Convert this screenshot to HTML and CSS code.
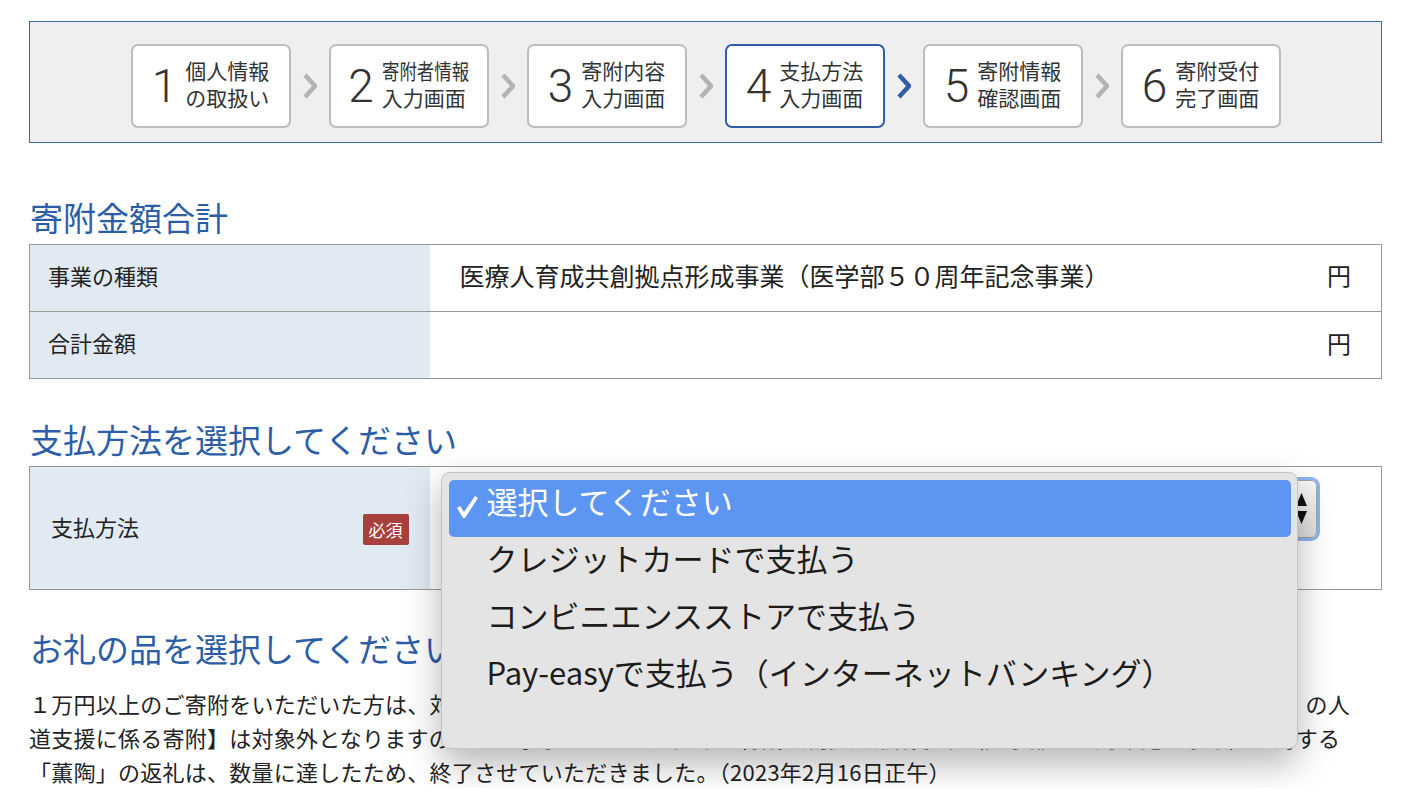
FILE: index.html
```html
<!DOCTYPE html>
<html lang="ja">
<head>
  <meta charset="UTF-8" />
  <meta name="viewport" content="width=device-width, initial-scale=1" />
  <title>寄附申込 支払方法入力画面</title>
  <link rel="stylesheet" href="styles.css">
</head>
<body>
  <div class="page">

    <div class="steps">
      <div class="step">
        <span class="step-no">1</span>
        <span class="step-label">個人情報<br>の取扱い</span>
      </div>
      <svg class="chev" viewBox="0 0 14 26"><polyline points="2,2 12,13 2,24" /></svg>
      <div class="step">
        <span class="step-no">2</span>
        <span class="step-label"><span class="narrow">寄附者情報</span><br>入力画面</span>
      </div>
      <svg class="chev" viewBox="0 0 14 26"><polyline points="2,2 12,13 2,24" /></svg>
      <div class="step">
        <span class="step-no">3</span>
        <span class="step-label">寄附内容<br>入力画面</span>
      </div>
      <svg class="chev" viewBox="0 0 14 26"><polyline points="2,2 12,13 2,24" /></svg>
      <div class="step current">
        <span class="step-no">4</span>
        <span class="step-label">支払方法<br>入力画面</span>
      </div>
      <svg class="chev next" viewBox="0 0 14 26"><polyline points="2,2 12,13 2,24" /></svg>
      <div class="step">
        <span class="step-no">5</span>
        <span class="step-label">寄附情報<br>確認画面</span>
      </div>
      <svg class="chev" viewBox="0 0 14 26"><polyline points="2,2 12,13 2,24" /></svg>
      <div class="step">
        <span class="step-no">6</span>
        <span class="step-label">寄附受付<br>完了画面</span>
      </div>
    </div>

    <h2 class="sec-title first">寄附金額合計</h2>
    <table class="form-table">
      <tr>
        <th>事業の種類</th>
        <td><div class="amount"><span>医療人育成共創拠点形成事業（医学部５０周年記念事業）</span><span>円</span></div></td>
      </tr>
      <tr>
        <th>合計金額</th>
        <td><div class="amount"><span></span><span>円</span></div></td>
      </tr>
    </table>

    <h2 class="sec-title">支払方法を選択してください</h2>
    <table class="form-table pay-table">
      <tr>
        <th><div class="label-row"><span>支払方法</span><span class="req">必須</span></div></th>
        <td>
          <div class="select-wrap">
            <div class="select">
              <svg class="select-arrows" viewBox="0 0 11 32"><polygon points="5.5,0 11,13 0,13" /><polygon points="0,18 11,18 5.5,31" /></svg>
            </div>
            <ul class="popup">
              <li class="selected">
                <svg class="check" viewBox="0 0 24 26"><path d="M2 14 L5 12 L9 18 L20 2 L23 4 L10 24 L8 24 Z" /></svg>
                選択してください
              </li>
              <li>クレジットカードで支払う</li>
              <li>コンビニエンスストアで支払う</li>
              <li>Pay-easyで支払う（インターネットバンキング）</li>
            </ul>
          </div>
        </td>
      </tr>
    </table>

    <h2 class="sec-title gift">お礼の品を選択してください</h2>
    <p class="note">１万円以上のご寄附をいただいた方は、対象のお礼の品をお選びいただけます。ただし、【ウクライナ及びトルコ（地震被災地）の人<br>道支援に係る寄附】は対象外となりますので、ご了承ください。医療人育成共創拠点形成事業（医学部５０周年記念事業）に対する<br>「薫陶」の返礼は、数量に達したため、終了させていただきました。（2023年2月16日正午）</p>

  </div>
</body>
</html>
```

FILE: styles.css
```css
body {
  margin: 0;
  font-family: "Noto Sans CJK JP", "Noto Sans", sans-serif;
  color: #222;
  background: #fff;
}
.page {
  width: 1353px;
  padding: 21px 0 0 29px;
}

/* steps */
.steps {
  display: flex;
  justify-content: center;
  align-items: center;
  gap: 12px;
  background-color: #efefef;
  border: 1px solid #3d69ad;
  padding: 22px 0 14px;
}
.step {
  box-sizing: border-box;
  width: 160px;
  height: 84px;
  background: white;
  border: 2px solid #bdbdbd;
  border-radius: 7px;
  display: flex;
  align-items: center;
  justify-content: center;
  gap: 8px;
  color: #333;
}
.step.current {
  border-color: #2f5ea6;
}
.step-no {
  font-family: Roboto, "Liberation Sans", sans-serif;
  font-weight: 300;
  font-size: 46px;
  line-height: 1;
}
.step-label {
  font-size: 21px;
  line-height: 27px;
  margin-top: -5px;
}
.narrow {
  display: inline-block;
  width: 87px;
  white-space: nowrap;
  transform: scaleX(0.83);
  transform-origin: left center;
}
.chev {
  width: 14px;
  height: 26px;
  flex: none;
}
.chev polyline {
  fill: none;
  stroke: #b3b3b3;
  stroke-width: 4.5;
}
.chev.next polyline {
  stroke: #2f5ea6;
}

/* section titles */
.sec-title {
  font-size: 33px;
  font-weight: normal;
  color: #2c5ea7;
  line-height: 40px;
  margin: 40px 0 7px 1px;
}
.sec-title.first {
  margin-top: 54px;
  margin-bottom: 7px;
}
.sec-title.gift {
  margin-top: 38px;
  margin-bottom: 18px;
}

/* tables */
.form-table {
  width: 100%;
  border-collapse: collapse;
  border: 1px solid #999;
}
.form-table th,
.form-table td {
  border-top: 1px solid #999;
  height: 67px;
  padding: 0 0 6px;
  box-sizing: border-box;
}
.form-table th {
  width: 400px;
  background-color: #e1e9f3;
  font-weight: normal;
  font-size: 22px;
  text-align: left;
  padding-left: 18px;
}
.form-table td {
  font-size: 25px;
  padding-left: 30px;
  padding-right: 30px;
}
.amount {
  display: flex;
  justify-content: space-between;
}
.amount span:last-child {
  font-size: 24px;
}
.pay-table th {
  height: 123px;
  padding: 0 21px 4px 21px;
}
.pay-table td {
  vertical-align: top;
  padding: 13px 64px 0 18px;
}
.label-row {
  display: flex;
  justify-content: space-between;
  align-items: center;
}
.req {
  background-color: #a8413d;
  color: white;
  font-size: 17px;
  line-height: 31px;
  padding: 0 6px;
  border-radius: 2px;
  margin-top: 6px;
}

/* select + open list */
.select-wrap {
  position: relative;
}
.select {
  height: 58px;
  box-sizing: border-box;
  border: 1px solid #a3a3a3;
  border-radius: 6px;
  background: linear-gradient(#fbfbfb, #dedede);
  box-shadow: 0 0 0 3px #8db3f2;
  display: flex;
  justify-content: flex-end;
  align-items: center;
  padding-right: 9px;
}
.select-arrows {
  width: 11px;
  height: 32px;
  fill: #111;
}
.popup {
  position: absolute;
  left: -7px;
  top: -8px;
  width: 857px;
  height: 277px;
  box-sizing: border-box;
  margin: 0;
  padding: 7px 6px 0 7px;
  list-style: none;
  background-color: #e4e4e4;
  border: 1px solid #c4c4c4;
  border-radius: 9px;
  box-shadow: 0 14px 36px rgba(0,0,0,0.3);
  z-index: 10;
}
.popup li {
  position: relative;
  height: 57px;
  line-height: 41px;
  font-size: 31px;
  padding-left: 38px;
  color: #1c1c1c;
}
.popup li.selected {
  background-color: #5d95f3;
  color: white;
  border-radius: 5px;
}
.check {
  position: absolute;
  left: 6px;
  top: 14px;
  width: 24px;
  height: 26px;
  fill: white;
}

/* note */
.note {
  margin: 0;
  font-size: 22px;
  line-height: 34px;
  letter-spacing: 0.25px;
}
```
